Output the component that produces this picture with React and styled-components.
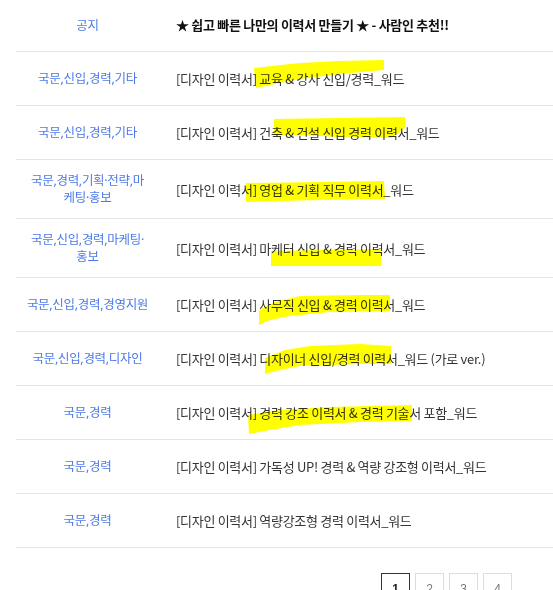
import React from 'react'
import styled, { createGlobalStyle } from 'styled-components';

const GlobalStyle = createGlobalStyle`
   html, body {
      margin: 0;
      padding: 0;
      background: #fff;
   }
   body {
      font-family: "Noto Sans", "Noto Sans CJK KR", sans-serif;
      overflow: hidden;
   }
`;

const Page = styled.div`
   position: relative;
   padding-left: 16px;
`;

const Board = styled.div`
   display: flex;
   flex-direction: column;
`;

const Row = styled.div`
   display: grid;
   grid-template-columns: 143px 1fr;
   align-items: center;
   box-sizing: border-box;
   min-height: ${props => props.head ? '52px' : '54px'};
   border-bottom: 1px solid #e6e6e6;
`;

const Category = styled.div`
   padding: 12px 10.5px;
   text-align: center;
   font-size: 12.5px;
   line-height: 17px;
   color: #4d7ae8;
   letter-spacing: -0.3px;
`;

const Subject = styled.div`
   padding: 12px 0 12px 17px;
   font-family: "Noto Sans CJK KR", "Noto Sans", sans-serif;
   font-size: 13px;
   line-height: 17px;
   color: ${props => props.head ? '#111' : '#333'};
   font-weight: ${props => props.head ? 700 : 400};
   letter-spacing: -0.3px;
   white-space: nowrap;
   margin-top: ${props => props.head ? '-2px' : '0'};
`;

const Marker = styled.svg`
   position: absolute;
   top: 0;
   left: 0;
   width: 553px;
   height: 590px;
   pointer-events: none;
   mix-blend-mode: multiply;
`;

const Paging = styled.div`
   display: flex;
   justify-content: flex-end;
   gap: 5px;
   padding: 25px 41px 0 0;
`;

const PageButton = styled.a`
   display: flex;
   align-items: flex-start;
   justify-content: center;
   width: 29px;
   height: 29px;
   box-sizing: border-box;
   border: 1px solid ${props => props.active ? '#333' : '#ddd'};
   color: ${props => props.active ? '#222' : '#777'};
   font-weight: ${props => props.active ? 700 : 400};
   font-size: 12px;
   font-family: "Liberation Sans", Arial, sans-serif;
   padding-top: 8px;
   text-decoration: none;
`;

const rows = [
   { cat: '국문,신입,경력,기타', title: '[디자인 이력서] 교육 & 강사 신입/경력_워드' },
   { cat: '국문,신입,경력,기타', title: '[디자인 이력서] 건축 & 건설 신입 경력 이력서_워드' },
   { cat: '국문,경력,기획·전략,마케팅·홍보', title: '[디자인 이력서] 영업 & 기획 직무 이력서_워드' },
   { cat: '국문,신입,경력,마케팅·홍보', title: '[디자인 이력서] 마케터 신입 & 경력 이력서_워드' },
   { cat: '국문,신입,경력,경영지원', title: '[디자인 이력서] 사무직 신입 & 경력 이력서_워드' },
   { cat: '국문,신입,경력,디자인', title: '[디자인 이력서] 디자이너 신입/경력 이력서_워드 (가로 ver.)' },
   { cat: '국문,경력', title: '[디자인 이력서] 경력 강조 이력서 & 경력 기술서 포함_워드' },
   { cat: '국문,경력', title: '[디자인 이력서] 가독성 UP! 경력 & 역량 강조형 이력서_워드' },
   { cat: '국문,경력', title: '[디자인 이력서] 역량강조형 경력 이력서_워드' },
];

// hand drawn highlighter strokes
const strokes = [
   '254,68 300,63 340,61 384,60 384,70 340,74 300,79 270,85 256,88',
   '274,119 340,118 405,117 406,127 392,138 340,137 300,135 274,135',
   '246,183 320,182 384,181 385,199 320,200 246,202',
   '271,251 320,250 381,249 381,266 271,266',
   '259,310 275,302 300,296 360,295 390,295 390,311 330,312 290,316 270,320 259,325',
   '265,358 285,350 310,346 360,344 391,346 391,364 360,364 300,366 280,370 265,374',
   '248,415 280,410 330,407 412,405 412,421 360,422 300,425 270,430 249,434',
];

const App = () => {
   return (
      <Page>
         <GlobalStyle />
         <Board>
            <Row head>
               <Category>공지</Category>
               <Subject head>★ 쉽고 빠른 나만의 이력서 만들기 ★ - 사람인 추천!!</Subject>
            </Row>
            {rows.map((row, i) => (
               <Row key={i}>
                  <Category>{row.cat}</Category>
                  <Subject>{row.title}</Subject>
               </Row>
            ))}
         </Board>
         <Paging>
            <PageButton active href="#">1</PageButton>
            <PageButton href="#">2</PageButton>
            <PageButton href="#">3</PageButton>
            <PageButton href="#">4</PageButton>
         </Paging>
         <Marker viewBox="0 0 553 590">
            {strokes.map((p, i) => (
               <polygon key={i} points={p} fill="#ffff00" />
            ))}
         </Marker>
      </Page>
   )
}

export default App
